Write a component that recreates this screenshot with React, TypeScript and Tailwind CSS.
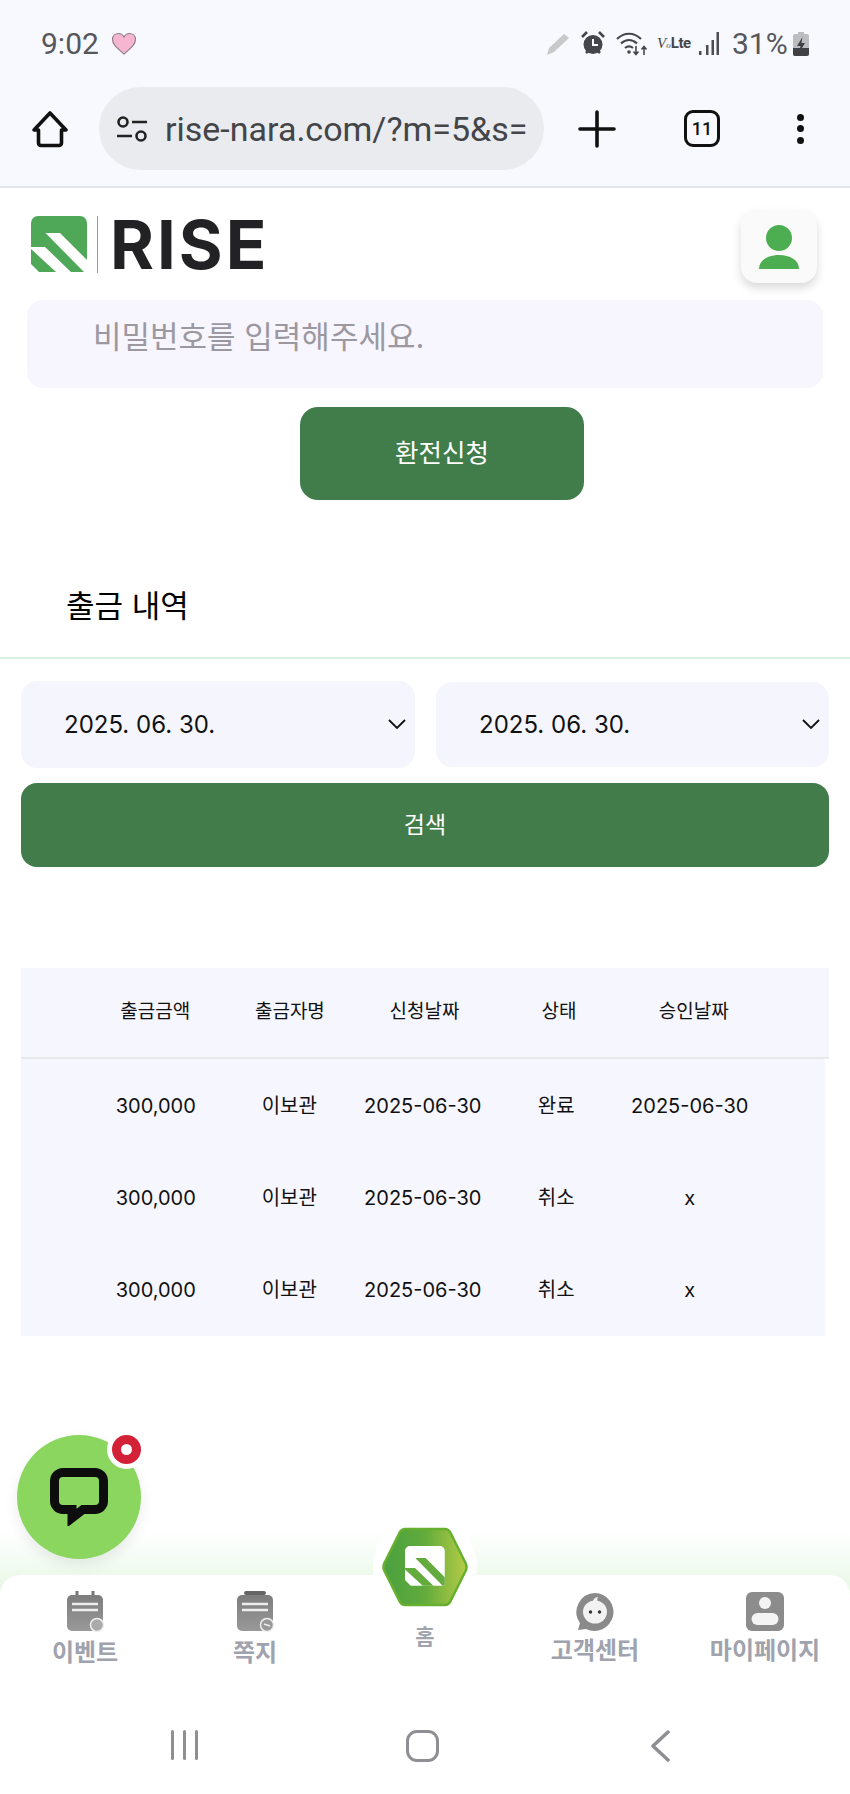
const rows = [
  { amount: '300,000', name: '이보관', date: '2025-06-30', status: '완료', approved: '2025-06-30' },
  { amount: '300,000', name: '이보관', date: '2025-06-30', status: '취소', approved: 'x' },
  { amount: '300,000', name: '이보관', date: '2025-06-30', status: '취소', approved: 'x' },
]

const headers = ['출금금액', '출금자명', '신청날짜', '상태', '승인날짜']

function StatusIcons() {
  return (
    <div className="flex items-center">
      <svg width="26" height="24" viewBox="0 0 26 24" className="mr-[10px]">
        <path d="M2 23l2-7L19 2l5 4L9 20z" fill="#c9c9cc" />
      </svg>
      <svg width="24" height="25" viewBox="0 0 24 25" className="mr-[11px]">
        <circle cx="12" cy="13.5" r="9.5" fill="#44464b" />
        <path d="M1 6l5-5M23 6l-5-5M5 22l2-2M19 22l-2-2" stroke="#44464b" strokeWidth="2.6" />
        <path d="M12 8v6h5" stroke="#f8f9fe" strokeWidth="2" fill="none" />
      </svg>
      <svg width="32" height="25" viewBox="0 0 32 25" className="mr-[9px]">
        <path d="M1 8c7-7 17-7 24 0M5 12.5c5-4.5 11-4.5 16 0M9 17c3-2.500 5-2.500 8 0" stroke="#44464b" strokeWidth="2.200" fill="none" />
        <circle cx="13" cy="21" r="1.800" fill="#44464b" />
        <path d="M20 15v8M17.500 20.500l2.500 3 2.500-3M28 24v-8M25.500 18.500l2.500-3 2.500 3" stroke="#44464b" strokeWidth="1.600" fill="none" />
      </svg>
      <div className="mr-[8px] flex w-[32px] items-baseline text-[#44464b]">
        <span className="font-['Liberation_Serif',serif] text-[15px] italic leading-none">V</span>
        <span className="font-['Liberation_Serif',serif] text-[9px] italic leading-none">o</span>
        <span className="font-['Roboto',sans-serif] text-[15px] font-bold leading-none tracking-tight">Lte</span>
      </div>
      <svg width="22" height="24" viewBox="0 0 22 24" className="mr-[13px]">
        <path d="M2 19h2.500v4H2zM9 13h2.500v10H9zM14.500 8H17v15h-2.500zM19.500 0H22v23h-2.500z" fill="#4b4d52" />
      </svg>
      <span className="w-[58px] font-['Roboto',sans-serif] text-[30px] leading-none text-[#55575c]">31%</span>
      <svg width="16" height="24" viewBox="0 0 16 24" className="ml-[3px]">
        <path d="M5 0h6v2h3a2 2 0 0 1 2 2v18a2 2 0 0 1-2 2H2a2 2 0 0 1-2-2V4a2 2 0 0 1 2-2h3z" fill="#bcbdc0" />
        <path d="M0 16h16v6a2 2 0 0 1-2 2H2a2 2 0 0 1-2-2z" fill="#3f4145" />
        <path d="M9.500 5L4 14h3.500L6 21l6-10H8.500z" fill="#3f4145" />
      </svg>
    </div>
  )
}

function BrowserBar() {
  return (
    <header className="h-[188px] border-b-2 border-[#e4e5ea] bg-[#f8f9fe]">
      <div className="flex h-[87px] items-center justify-between pl-[41px] pr-[41px]">
        <div className="flex items-center gap-[12px]">
          <span className="font-['Roboto',sans-serif] text-[30px] leading-none text-[#55575c]">9:02</span>
          <svg width="26" height="23" viewBox="0 0 26 23">
            <path d="M13 22C6 16 1.500 12.500 1.500 7.500 1.500 3.500 4.500 1.500 7.500 1.500c2.500 0 4.500 1.500 5.500 3.500 1-2 3-3.500 5.500-3.500 3 0 6 2 6 6 0 5-4.500 8.500-11.500 14.500z" fill="#f6b6d2" stroke="#8c7f86" strokeWidth="1.200" />
          </svg>
        </div>
        <StatusIcons />
      </div>
      <div className="flex h-[83px] items-center">
        <svg width="38" height="38" viewBox="0 0 38 38" className="ml-[31px]">
          <path d="M19 3L3 20h4.500v13a2.500 2.500 0 0 0 2.500 2.500h18a2.500 2.500 0 0 0 2.500-2.500V20H35z" fill="none" stroke="#111" strokeWidth="3.600" strokeLinejoin="round" />
        </svg>
        <div className="ml-[30px] flex h-[83px] w-[445px] items-center rounded-full bg-[#e9ebef] pl-[17px]">
          <svg width="32" height="26" viewBox="0 0 32 26" className="shrink-0">
            <circle cx="7" cy="6" r="4.500" fill="none" stroke="#222" strokeWidth="2.600" />
            <circle cx="25" cy="20" r="4.500" fill="none" stroke="#222" strokeWidth="2.600" />
            <path d="M16 6h15M1 20h15" stroke="#222" strokeWidth="2.600" />
          </svg>
          <span className="ml-[17px] whitespace-nowrap font-['Roboto',sans-serif] text-[34px] leading-none text-[#444548]">
            rise-nara.com/?m=5&amp;s=
          </span>
        </div>
        <svg width="38" height="38" viewBox="0 0 38 38" className="ml-[34px]">
          <path d="M19 2v34M2 19h34" stroke="#111" strokeWidth="3.600" strokeLinecap="round" />
        </svg>
        <div className="ml-[68px] flex h-[37px] w-[36px] items-center justify-center rounded-[9px] border-[3.500px] border-[#111] font-['Roboto',sans-serif] text-[18px] font-medium leading-none text-[#111]">
          11
        </div>
        <div className="ml-[77px] flex h-[30px] flex-col justify-between">
          <span className="h-[7px] w-[7px] rounded-full bg-[#111]" />
          <span className="h-[7px] w-[7px] rounded-full bg-[#111]" />
          <span className="h-[7px] w-[7px] rounded-full bg-[#111]" />
        </div>
      </div>
    </header>
  )
}

function MarkShapes({ body, stripe }: { body: string; stripe: string }) {
  return (
    <>
      <path d="M0 7a7 7 0 0 1 7-7h42a7 7 0 0 1 7 7v49H8l-8-8z" fill={body} />
      <path d="M14.500 17H29l27 27v12h-3z" fill={stripe} />
      <path d="M0 31h14l26 25H25L0 33z" fill={stripe} />
    </>
  )
}

function AppHeader() {
  return (
    <div className="flex h-[112px] items-start justify-between pl-[31px] pr-[33px] pt-[22px]">
      <div className="mt-[6px] flex items-center">
        <svg width="56" height="57" viewBox="0 0 56 57">
          <MarkShapes body="#4fa857" stripe="#fff" />
        </svg>
        <div className="ml-[10px] h-[57px] w-px bg-[#9a9a9a]" />
        <span className="ml-[12px] font-['Inter',sans-serif] text-[67px] font-bold leading-[57px] tracking-[3px] text-[#222224]">
          RISE
        </span>
      </div>
      <div className="flex h-[73px] w-[76px] items-center justify-center rounded-[16px] bg-[#fafafa] shadow-[0_5px_10px_rgba(0,0,0,0.15)]">
        <svg width="40" height="44" viewBox="0 0 40 44">
          <ellipse cx="20" cy="13" rx="13" ry="13" fill="#4cae50" />
          <path d="M0 44c0-9 9-14 20-14s20 5 20 14z" fill="#4cae50" />
        </svg>
      </div>
    </div>
  )
}

function Chevron() {
  return (
    <svg width="18" height="11" viewBox="0 0 18 11">
      <path d="M1 1l8 8 8-8" fill="none" stroke="#111" strokeWidth="1.800" />
    </svg>
  )
}

function DateSelect({ className }: { className: string }) {
  return (
    <div className={`flex items-center justify-between rounded-[16px] bg-[#f5f5fd] pl-[43px] pr-[9px] ${className}`}>
      <span className="text-[24px] leading-none text-[#111]">2025. 06. 30.</span>
      <Chevron />
    </div>
  )
}

function WithdrawTable() {
  return (
    <div className="mx-[21px] mt-[101px] text-[#111]">
      <div className="grid h-[91px] grid-cols-[repeat(5,134.6px)] items-center border-b-2 border-[#e6ebe9] bg-[#f6f6ff] pl-[67px]">
        {headers.map((h) => (
          <div key={h} className="text-center text-[19px]">{h}</div>
        ))}
      </div>
      <div className="grid h-[277px] w-[804px] auto-rows-[92px] grid-cols-[repeat(5,133.5px)] items-center bg-[#f6f6ff] pl-[68px] pt-[1px]">
        {rows.map((r, i) => (
          <div key={i} className="contents">
            <div className="text-center text-[20px]">{r.amount}</div>
            <div className="text-center text-[20px]">{r.name}</div>
            <div className="whitespace-nowrap text-center text-[20px]">{r.date}</div>
            <div className="text-center text-[20px]">{r.status}</div>
            <div className="whitespace-nowrap text-center text-[20px]">{r.approved}</div>
          </div>
        ))}
      </div>
    </div>
  )
}

function EventIcon() {
  return (
    <svg width="38" height="41" viewBox="0 0 38 41">
      <defs>
        <linearGradient id="grey1" x1="0" y1="0" x2="0" y2="1">
          <stop offset="0" stopColor="#7d7d7d" />
          <stop offset="1" stopColor="#999" />
        </linearGradient>
      </defs>
      <path d="M11 0v6M27 0v6" stroke="#777" strokeWidth="3" />
      <rect x="1" y="4" width="36" height="36" rx="5" fill="url(#grey1)" />
      <path d="M6 13h26M6 19h26" stroke="#eee" strokeWidth="2.400" />
      <circle cx="31" cy="34" r="6.500" fill="#aaa" stroke="#eee" strokeWidth="1.500" />
    </svg>
  )
}

function NoteIcon() {
  return (
    <svg width="38" height="41" viewBox="0 0 38 41">
      <path d="M10 2h18" stroke="#666" strokeWidth="4" strokeLinecap="round" />
      <rect x="1" y="4" width="36" height="36" rx="5" fill="url(#grey1)" />
      <path d="M6 13h26M6 19h26" stroke="#eee" strokeWidth="2.400" />
      <circle cx="31" cy="34" r="6.500" fill="#999" stroke="#eee" strokeWidth="1.500" />
      <path d="M28 33l6 2" stroke="#eee" strokeWidth="1.500" />
    </svg>
  )
}

function SupportIcon() {
  return (
    <svg width="38" height="40" viewBox="0 0 38 40">
      <path d="M19 1a19 19 0 1 1-9 36l-8 1 2-7A19 19 0 0 1 19 1z" fill="#8a8a8a" />
      <ellipse cx="19" cy="20" rx="12" ry="11.500" fill="#f2f2f2" />
      <path d="M17 9c1-3 3-4 5-4-1 2-1 3 0 5z" fill="#f2f2f2" />
      <circle cx="14.500" cy="20" r="1.700" fill="#333" />
      <circle cx="23.500" cy="20" r="1.700" fill="#333" />
    </svg>
  )
}

function MyPageIcon() {
  return (
    <svg width="38" height="39" viewBox="0 0 38 39">
      <rect width="38" height="39" rx="6" fill="#8c8c8c" />
      <circle cx="19" cy="11" r="6" fill="#f4f4f4" />
      <rect x="5.500" y="21" width="27" height="12" rx="6" fill="#f4f4f4" />
    </svg>
  )
}

function HomeHex() {
  return (
    <svg width="86" height="80" viewBox="0 0 86 80">
      <defs>
        <linearGradient id="hex" x1="0" y1="0" x2="1" y2="0">
          <stop offset="0" stopColor="#4aa040" />
          <stop offset="0.5" stopColor="#62ab3c" />
          <stop offset="1" stopColor="#b5cc46" />
        </linearGradient>
      </defs>
      <path d="M23 2h40q3 0 5 3l16 32q1 3 0 6L68 75q-2 3-5 3H23q-3 0-5-3L2 43q-1-3 0-6L18 5q2-3 5-3z" fill="url(#hex)" stroke="#67b02f" strokeWidth="2.500" />
      <g transform="translate(23 19) scale(0.71)">
        <MarkShapes body="#fff" stripe="#62ab3c" />
      </g>
    </svg>
  )
}

function NavItem({ label, icon, labelGap }: { label: string; icon: React.ReactNode; labelGap: string }) {
  return (
    <div className="flex flex-col items-center">
      <div className="flex h-[41px] items-center">{icon}</div>
      <span className={`whitespace-nowrap text-[24px] font-bold leading-[30px] text-[#a0a2ad] ${labelGap}`}>{label}</span>
    </div>
  )
}

function BottomNav() {
  return (
    <div className="relative z-10 -mt-[20px] h-[219px] rounded-t-[20px] bg-white pt-[16px]">
      <div className="grid grid-cols-5">
        <NavItem label="이벤트" icon={<EventIcon />} labelGap="mt-[6px]" />
        <NavItem label="쪽지" icon={<NoteIcon />} labelGap="mt-[6px]" />
        <div className="relative flex justify-center">
          <span className="mt-[31px] text-[21px] font-bold leading-[30px] text-[#a0a2ad]">홈</span>
          <div className="absolute -top-[76px] left-1/2 flex h-[104px] w-[104px] -translate-x-1/2 items-center justify-center rounded-full bg-white">
            <HomeHex />
          </div>
        </div>
        <NavItem label="고객센터" icon={<SupportIcon />} labelGap="mt-[4px]" />
        <NavItem label="마이페이지" icon={<MyPageIcon />} labelGap="mt-[4px]" />
      </div>
      <div className="mt-[62px] grid grid-cols-3 pl-[65px] pr-[71px]">
        <div className="flex justify-center gap-[9px]">
          <span className="h-[30px] w-[3px] rounded-full bg-[#8e8e93]" />
          <span className="h-[30px] w-[3px] rounded-full bg-[#8e8e93]" />
          <span className="h-[30px] w-[3px] rounded-full bg-[#8e8e93]" />
        </div>
        <div className="flex justify-center">
          <span className="h-[32px] w-[33px] rounded-[11px] border-[3.500px] border-[#8e8e93]" />
        </div>
        <div className="flex justify-center">
          <svg width="20" height="32" viewBox="0 0 20 32">
            <path d="M18 2L3 16l15 14" fill="none" stroke="#8e8e93" strokeWidth="3.500" strokeLinecap="round" strokeLinejoin="round" />
          </svg>
        </div>
      </div>
    </div>
  )
}

function ChatButton() {
  return (
    <div className="absolute left-[17px] top-[1435px] z-20 flex h-[124px] w-[124px] items-center justify-center rounded-full bg-[#8ad65e] shadow-[0_6px_14px_rgba(0,0,0,0.08)]">
      <svg width="58" height="58" viewBox="0 0 58 58">
        <path d="M13 4.500h32a8.500 8.500 0 0 1 8.500 8.500v20a8.500 8.500 0 0 1-8.500 8.500H33L22 50v-8.500h-9A8.500 8.500 0 0 1 4.500 33V13A8.500 8.500 0 0 1 13 4.500z" fill="none" stroke="#0d0d0d" strokeWidth="9" strokeLinejoin="miter" />
      </svg>
      <div className="absolute -right-[5px] -top-[5px] box-content flex h-[29px] w-[29px] items-center justify-center rounded-full border-[5px] border-white bg-[#d32237]">
        <span className="h-[11px] w-[11px] rounded-full bg-white" />
      </div>
    </div>
  )
}

export default function App() {
  return (
    <div className="relative flex h-[1794px] w-[850px] flex-col overflow-hidden bg-[#fefffe] font-['Inter','Noto_Sans_CJK_KR',sans-serif]">
      <BrowserBar />
      <AppHeader />

      <div className="mx-[27px] flex h-[88px] items-center rounded-[16px] bg-[#f7f5fe] pb-[14px] pl-[66px] text-[31px] text-[#9b98a0]">
        비밀번호를 입력해주세요.
      </div>
      <button className="ml-[300px] mt-[19px] h-[93px] w-[284px] rounded-[18px] bg-[#407d4a] text-[25.5px] text-white">
        환전신청
      </button>

      <div className="flex h-[159px] items-center border-b-2 border-[#d9ede3] pl-[66px] pt-[56px]">
        <span className="text-[31px] text-black">출금 내역</span>
      </div>

      <div className="mx-[21px] mt-[22px] flex items-center gap-[21px]">
        <DateSelect className="h-[87px] w-[394px]" />
        <DateSelect className="h-[85px] w-[393px]" />
      </div>
      <button className="mx-[21px] mt-[15px] h-[84px] rounded-[16px] bg-[#427c4a] text-[23px] text-white">
        검색
      </button>

      <WithdrawTable />

      <div className="mt-[197px] h-[62px] bg-linear-to-b from-[#fefffe] to-[#e6f7e4]" />
      <BottomNav />
      <ChatButton />
    </div>
  )
}
